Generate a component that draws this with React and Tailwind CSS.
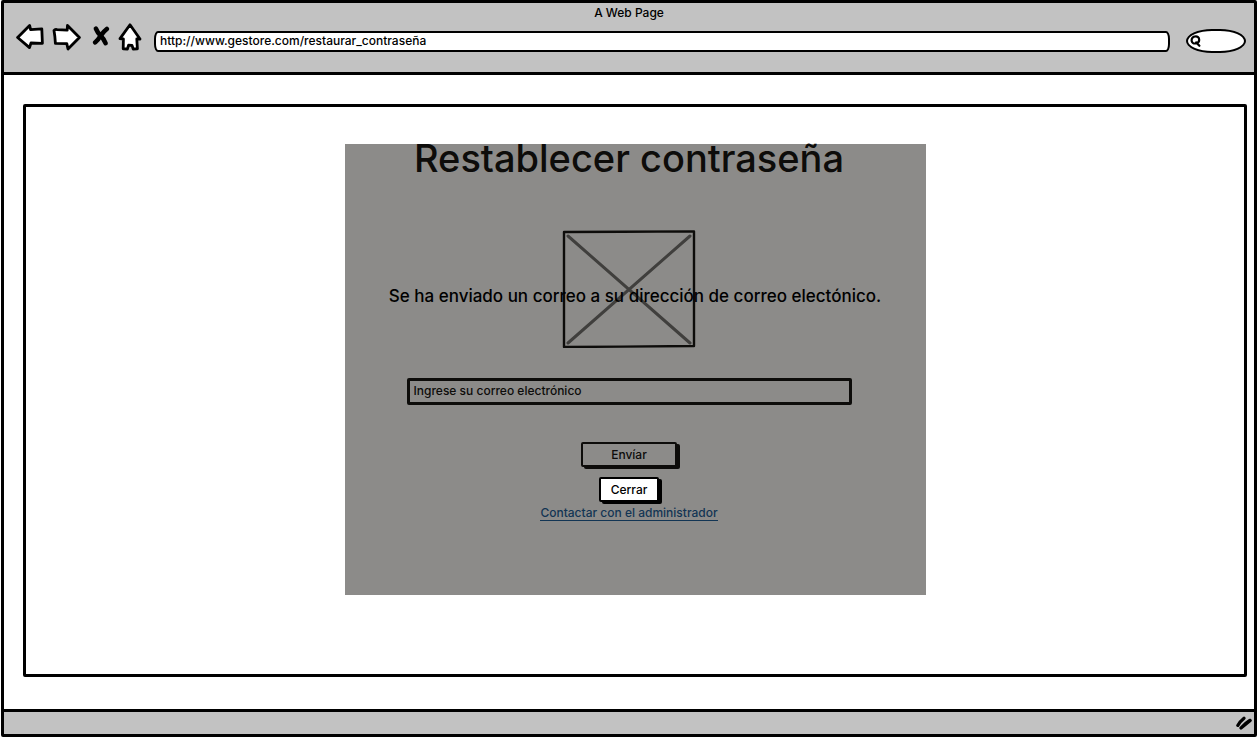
import React from "react";

const iconStroke = {
  stroke: "#000",
  strokeWidth: 2.8,
  strokeLinejoin: "round",
  strokeLinecap: "round",
};

function BackIcon() {
  return (
    <svg width="28" height="28" viewBox="0 0 28 28" fill="#fff" {...iconStroke} aria-hidden="true">
      <path d="M1.6 14.5 L13.6 2.4 L14.6 6.6 L25.8 5.8 L26.4 20.3 L15 20 L13.5 24.6 Z" />
    </svg>
  );
}

function ForwardIcon() {
  return (
    <svg width="29" height="28" viewBox="0 0 29 28" fill="#fff" {...iconStroke} aria-hidden="true">
      <path d="M2 7.6 Q3 6 5 6.6 L15.2 7.2 L15.5 2.4 L27.4 14.5 L16 26 L14.8 20.6 L3.4 20.4 Q3 13 2 7.6 Z" />
    </svg>
  );
}

function StopIcon() {
  return (
    <svg width="18" height="28" viewBox="0 0 18 28" fill="none" {...iconStroke} strokeWidth="4.6" aria-hidden="true">
      <path d="M3.9 5.6 Q5.6 9.8 8.6 12.6 Q12 16 13.6 20.2" />
      <path d="M14.8 6 Q11.5 8.6 8.9 12.4 Q6.5 16.4 3.2 19.4" />
    </svg>
  );
}

function HomeIcon() {
  return (
    <svg width="24" height="28" viewBox="0 0 24 28" fill="#fff" {...iconStroke} aria-hidden="true">
      <path d="M12 1.8 L22 16 L18.8 16 L19.4 25.8 L15.2 26 L14 22.4 L10.6 22.2 L9.4 26 L5.2 25.8 L5.4 16 L2 15.6 Z" />
    </svg>
  );
}

function SearchIcon() {
  return (
    <svg className="shrink-0" width="14" height="14" viewBox="0 0 14 14" fill="none" stroke="#000" strokeWidth="2.2" strokeLinecap="round" aria-hidden="true">
      <path d="M9.2 6 C9.2 3.4 7.4 2.2 5.4 2.4 C2.8 2.6 1.4 4.4 1.6 6.8 C2 9 3.8 9.8 5.6 9.4 C8 9 9.2 7.8 9.2 6 Z" />
      <path d="M6.2 8.4 L9.4 11.8" />
    </svg>
  );
}

function ResizeGrip() {
  return (
    <svg width="16" height="14" viewBox="0 0 16 14" fill="none" stroke="#000" strokeWidth="3.2" strokeLinecap="round" aria-hidden="true">
      <path d="M1.8 9.4 Q4 5.4 8 2.2" />
      <path d="M5 12 Q8.6 9 14.2 4.4 M5.4 11.6 Q9.6 7 13.8 4.4" />
    </svg>
  );
}

function BrowserBar() {
  return (
    <header className="border-b-3 border-black bg-[#c2c2c2] pb-[19px]">
      <h1 className="text-center leading-5">A Web Page</h1>
      <div className="flex items-start pl-3 pr-2">
        <nav className="flex items-start" aria-label="Navegación">
          <button type="button" aria-label="Atrás" className="mr-2"><BackIcon /></button>
          <button type="button" aria-label="Adelante" className="mr-[11px]"><ForwardIcon /></button>
          <button type="button" aria-label="Detener" className="mr-2"><StopIcon /></button>
          <button type="button" aria-label="Inicio" className="mr-3"><HomeIcon /></button>
        </nav>
        <input
          type="text"
          aria-label="Dirección"
          defaultValue="http://www.gestore.com/restaurar_contraseña"
          className="mt-2 h-[21px] min-w-0 flex-1 rounded-[4px/8px] border-2 border-black bg-white px-1 pb-0.5 outline-none"
        />
        <label className="ml-4 mt-1.5 flex h-6 w-[60px] items-center rounded-[26px/12px] border-2 border-black bg-white pl-0.5">
          <SearchIcon />
          <input type="search" aria-label="Buscar" className="w-full min-w-0 bg-transparent outline-none" />
        </label>
      </div>
    </header>
  );
}

function ResetForm() {
  return (
    <form className="flex flex-col items-center pr-3 pb-[74px]" onSubmit={(e) => e.preventDefault()}>
      <h2 className="text-[38px] leading-7 whitespace-nowrap">Restablecer contraseña</h2>
      <svg className="mt-[58px]" width="134" height="118" viewBox="0 0 134 118" fill="none" aria-hidden="true">
        <path d="M6 6 L128 113 M128 6 L6 113" stroke="#666" strokeWidth="3" strokeLinecap="round" />
        <path d="M2 2 L60 1.8 L132 1.4 L132 116 L60 116.6 L2 117 Z" stroke="#000" strokeWidth="2.4" strokeLinejoin="round" />
      </svg>
      <input
        type="email"
        aria-label="Correo electrónico"
        placeholder="Ingrese su correo electrónico"
        className="mt-[30px] h-[27px] w-[445px] max-w-full rounded-xs border-3 border-black px-1 pb-0.5 placeholder:text-black outline-none"
      />
      <button
        type="submit"
        className="mt-[37px] h-[25px] w-24 rounded-xs border-2 border-black bg-white leading-5 shadow-[3px_2px_0_0_#000]"
      >
        Envíar
      </button>
      <a href="#contacto" className="mt-[38px] border-b border-[#0b5394] leading-[15px] text-[#0b5394]">
        Contactar con el administrador
      </a>
    </form>
  );
}

function SentDialog() {
  return (
    <div role="dialog" aria-label="Correo enviado" className="absolute inset-0 flex flex-col items-center bg-[#1a1713]/50 pt-[140px]">
      <p className="text-[17px] leading-6 whitespace-nowrap">Se ha enviado un correo a su dirección de correo electónico.</p>
      <button
        type="button"
        className="mt-[169px] mr-3 h-[25px] w-[60px] rounded-xs border-2 border-black bg-white leading-5 shadow-[3px_2px_0_0_#000]"
      >
        Cerrar
      </button>
    </div>
  );
}

export default function App() {
  return (
    <div className="flex min-h-screen flex-col bg-white px-px pb-px font-['Inter','Open_Sans',sans-serif] text-[12px] font-medium text-black">
      <div className="flex flex-1 flex-col rounded-xs border-3 border-black">
        <BrowserBar />
        <main className="mt-[29px] mr-[7px] mb-8 ml-[19px] flex-1 rounded-xs border-3 border-black px-4 pt-[37px] pb-10">
          <section className="relative mx-auto w-full max-w-[581px]">
            <ResetForm />
            <SentDialog />
          </section>
        </main>
        <footer className="flex h-[25px] items-center justify-end border-t-3 border-black bg-[#c2c2c2] pr-0.5">
          <ResizeGrip />
        </footer>
      </div>
    </div>
  );
}
